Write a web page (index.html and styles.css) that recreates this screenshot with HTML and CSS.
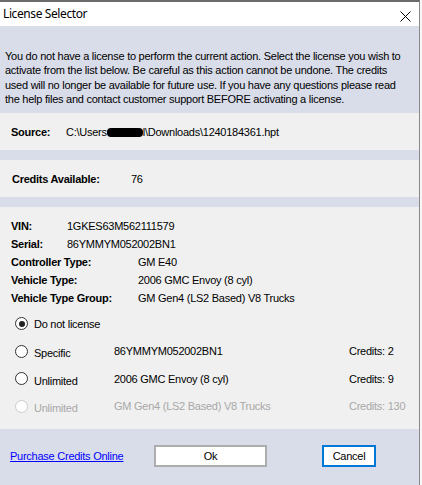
FILE: index.html
```html
<!DOCTYPE html>
<html lang="en">
<head>
    <meta charset="UTF-8">
    <meta name="viewport" content="width=device-width, initial-scale=1.0">
    <title>License Selector</title>
    <link rel="stylesheet" href="styles.css">
</head>
<body>
    <div class="window">
        <div class="titlebar">
            <span class="title">License Selector</span>
            <svg class="close" width="11" height="11" viewBox="0 0 11 11">
                <path d="M0.5 0.5 L10.5 10.5 M10.5 0.5 L0.5 10.5" stroke="#000" stroke-width="1" fill="none"/>
            </svg>
        </div>

        <div class="notice">
            You do not have a license to perform the current action. Select the license you wish to<br>
            activate from the list below. Be careful as this action cannot be undone. The credits<br>
            used will no longer be available for future use. If you have any questions please read<br>
            the help files and contact customer support BEFORE activating a license.
        </div>

        <div class="panel panel-source">
            <span class="label source-label">Source:</span>
            <span>C:\Users<span class="redacted"></span>l\Downloads\1240184361.hpt</span>
        </div>

        <div class="panel panel-credits">
            <span class="label credits-label">Credits Available:</span>
            <span>76</span>
        </div>

        <div class="panel panel-vehicle">
            <div class="info-row">
                <span class="label short">VIN:</span>
                <span>1GKES63M562111579</span>
            </div>
            <div class="info-row">
                <span class="label short">Serial:</span>
                <span>86YMMYM052002BN1</span>
            </div>
            <div class="info-row">
                <span class="label long">Controller Type:</span>
                <span>GM E40</span>
            </div>
            <div class="info-row">
                <span class="label long">Vehicle Type:</span>
                <span>2006 GMC Envoy (8 cyl)</span>
            </div>
            <div class="info-row">
                <span class="label long">Vehicle Type Group:</span>
                <span>GM Gen4 (LS2 Based) V8 Trucks</span>
            </div>

            <div class="options">
                <div class="option">
                    <span class="radio checked"></span>
                    <span class="opt-name">Do not license</span>
                </div>
                <div class="option">
                    <span class="radio"></span>
                    <span class="opt-name low">Specific</span>
                    <span class="opt-target">86YMMYM052002BN1</span>
                    <span class="opt-credits">Credits: 2</span>
                </div>
                <div class="option">
                    <span class="radio"></span>
                    <span class="opt-name low">Unlimited</span>
                    <span class="opt-target">2006 GMC Envoy (8 cyl)</span>
                    <span class="opt-credits">Credits: 9</span>
                </div>
                <div class="option disabled">
                    <span class="radio"></span>
                    <span class="opt-name low">Unlimited</span>
                    <span class="opt-target">GM Gen4 (LS2 Based) V8 Trucks</span>
                    <span class="opt-credits">Credits: 130</span>
                </div>
            </div>
        </div>

        <div class="footer">
            <a href="#" class="purchase">Purchase Credits Online</a>
            <button class="btn btn-ok">Ok</button>
            <button class="btn btn-cancel">Cancel</button>
        </div>
    </div>
</body>
</html>
```

FILE: styles.css
```css
body {
    margin: 0;
    background: #f7f7f7;
    font-family: "Liberation Sans", Arial, sans-serif;
    font-size: 11px;
    letter-spacing: -0.25px;
    color: #000;
}
.window {
    width: 419px;
    height: 483px;
    border-top: 2px solid #6b6b6b;
    border-right: 1px solid #8a8a8a;
    background: #d9dce9;
    display: flex;
    flex-direction: column;
}
.titlebar {
    height: 24px;
    background: #fff;
    display: flex;
    align-items: center;
    justify-content: space-between;
    padding: 0 8px 0 3px;
}
.title {
    font-family: "Noto Sans", "Open Sans", sans-serif;
    font-size: 12px;
    letter-spacing: -0.4px;
    margin-top: -2px;
}
.close {
    margin-top: 4px;
}
.notice {
    padding: 23px 5px 7px 5px;
    line-height: 14.4px;
    height: 57px;
    white-space: nowrap;
}
.panel {
    background: #f0f0f0;
}
.panel-source, .panel-credits {
    height: 37px;
    display: flex;
    align-items: center;
    padding-left: 11px;
    white-space: nowrap;
}
.panel-credits {
    margin-top: 10px;
    padding-left: 12px;
}
.label {
    font-weight: bold;
}
.source-label {
    width: 55px;
}
.credits-label {
    width: 119px;
}
.redacted {
    display: inline-block;
    width: 36px;
    height: 9px;
    background: #000;
    border-radius: 4px;
    vertical-align: -1px;
}
.panel-vehicle {
    margin-top: 10px;
    height: 212px;
    padding-top: 10px;
}
.info-row {
    height: 18px;
    display: flex;
    align-items: center;
    padding-left: 11px;
}
.label.short {
    width: 56px;
}
.label.long {
    width: 127px;
}
.options {
    margin-top: 3px;
}
.option {
    height: 27.5px;
    display: flex;
    align-items: center;
    padding-left: 15px;
}
.radio {
    width: 11px;
    height: 11px;
    border: 1px solid #333;
    border-radius: 50%;
    background: #fff;
    position: relative;
    margin-right: 6px;
}
.radio.checked::after {
    content: "";
    position: absolute;
    left: 2.5px;
    top: 2.5px;
    width: 6px;
    height: 6px;
    border-radius: 50%;
    background: #222;
}
.opt-name {
    width: 80px;
}
.opt-name.low {
    margin-top: 4px;
}
.opt-target {
    width: 235px;
}
.option.disabled {
    color: #a8a8a8;
}
.option.disabled .radio {
    border-color: #cccccc;
}
.footer {
    flex: 1;
    display: flex;
    align-items: center;
    padding-left: 10px;
    padding-bottom: 3px;
}
.purchase {
    color: #0000ff;
    text-decoration: underline;
    width: 144px;
}
.btn {
    font-family: "Liberation Sans", Arial, sans-serif;
    font-size: 11px;
    letter-spacing: -0.25px;
    background: #fff;
    height: 22px;
    padding: 0;
    color: #000;
}
.btn-ok {
    width: 113px;
    border: 2px solid #adadad;
}
.btn-cancel {
    width: 54px;
    margin-left: 55px;
    border: 2px solid #0078d7;
}
```
